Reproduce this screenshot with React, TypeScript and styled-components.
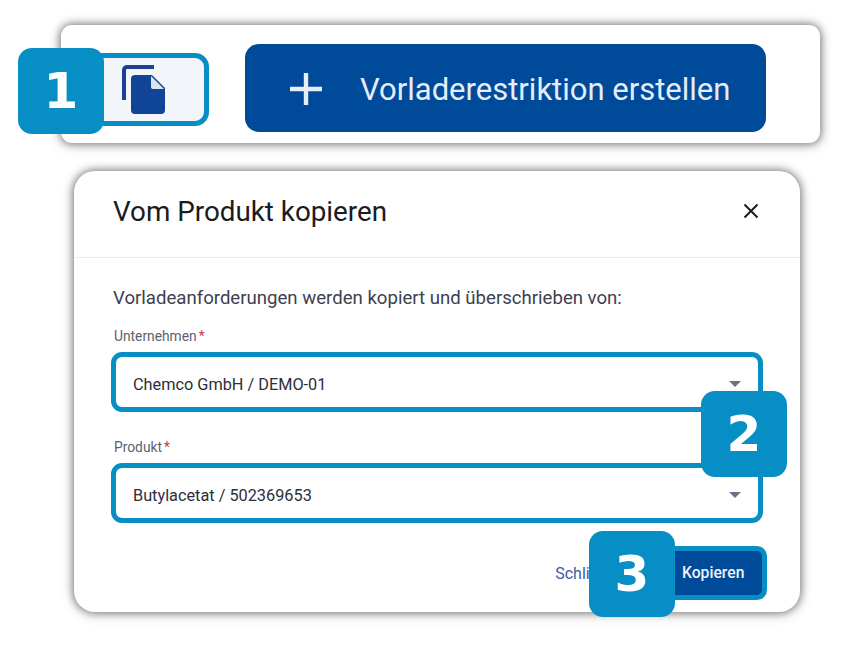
import React from 'react';
import styled, { createGlobalStyle } from 'styled-components';

const Global = createGlobalStyle`
    html, body {
        margin: 0;
        padding: 0;
        background: #fff;
        font-family: Roboto, "Liberation Sans", sans-serif;
    }
`;

const Page = styled.div`
    position: relative;
    width: 844px;
    height: 646px;
    overflow: hidden;
    padding: 25px 24px 0 61px;
    box-sizing: border-box;
`;

const Toolbar = styled.div`
    width: 759px;
    height: 118px;
    box-sizing: border-box;
    padding: 19px 54px 0 0;
    display: flex;
    justify-content: space-between;
    align-items: flex-start;
    background: #fff;
    border-radius: 11px;
    box-shadow: 0 0 9px 1px rgba(0, 0, 0, 0.5), 0 2px 16px rgba(0, 0, 0, 0.12);
`;

const CopyButton = styled.div`
    width: 148px;
    height: 73px;
    margin-top: 9px;
    box-sizing: border-box;
    display: flex;
    align-items: center;
    padding-left: 56px;
    background: #f2f6fb;
    border: 5px solid #078fc5;
    border-radius: 14px;
`;

const CreateButton = styled.div`
    width: 521px;
    height: 88px;
    box-sizing: border-box;
    padding: 2px 0 0 44px;
    display: flex;
    align-items: center;
    gap: 37px;
    background: #004a9a;
    color: #e6edf7;
    border-radius: 14px;
    font-size: 31px;
    font-weight: 400;
    white-space: nowrap;
`;

const Dialog = styled.div`
    width: 726px;
    height: 441px;
    margin: 28px 0 0 13px;
    background: #fff;
    border-radius: 21px;
    box-shadow: 0 0 9px 1px rgba(0, 0, 0, 0.5), 0 2px 16px rgba(0, 0, 0, 0.12);
    display: flex;
    flex-direction: column;
`;

const DialogHeader = styled.div`
    height: 87px;
    box-sizing: border-box;
    padding: 0 41px 6px 39px;
    display: flex;
    justify-content: space-between;
    align-items: center;
    border-bottom: 1px solid #eceef1;
`;

const Title = styled.div`
    font-size: 27.8px;
    color: #1b1c21;
`;

const DialogBody = styled.div`
    padding: 30px 37px 0 37px;
    display: flex;
    flex-direction: column;
`;

const Intro = styled.div`
    font-size: 18.6px;
    line-height: 20px;
    margin-left: 2px;
    color: #3d4150;
`;

const Label = styled.div`
    font-size: 13.8px;
    line-height: 16px;
    margin: 20px 0 8px 3px;
    color: #5d6070;

    span {
        color: #c9374e;
        margin-left: 2px;
    }
`;

const Select = styled.div`
    height: 60px;
    box-sizing: border-box;
    display: flex;
    justify-content: space-between;
    align-items: center;
    padding: 4px 17px 0 17px;
    border: 5px solid #078fc5;
    border-radius: 11px;
    font-size: 16.3px;
    color: #2c2e38;
    & + ${Label} {
        margin-top: 27px;
    }
`;

const Caret = styled.div`
    width: 0;
    height: 0;
    border-left: 6px solid transparent;
    border-right: 6px solid transparent;
    border-top: 6px solid #6e7085;
`;

const Actions = styled.div`
    display: flex;
    justify-content: flex-end;
    align-items: center;
    margin: 23px -4px 0 0;
    gap: 24px;
`;

const CloseLink = styled.div`
    font-size: 16px;
    color: #3b5aa6;
`;

const SubmitButton = styled.div`
    width: 118px;
    height: 54px;
    box-sizing: border-box;
    padding: 0 0 2px 28px;
    display: flex;
    align-items: center;
    background: #004a9a;
    border: 5px solid #078fc5;
    border-radius: 10px;
    color: #eef3fa;
    font-size: 15.7px;
    font-weight: 500;
`;

const Badge = styled.div<{ $x: number; $y: number }>`
    position: absolute;
    left: ${p => p.$x}px;
    top: ${p => p.$y}px;
    width: 86px;
    height: 86px;
    display: flex;
    align-items: center;
    justify-content: center;
    background: #078fc5;
    border-radius: 14px;
    color: #fff;
    font-family: "DejaVu Sans", sans-serif;
    font-weight: 700;
    font-size: 50px;
`;

const CopyIcon = () => (
    <svg width="46" height="50" viewBox="0 0 46 50">
        <path d="M2 35V5a3 3 0 0 1 3-3h27" fill="none" stroke="#1d3f95" strokeWidth="4" />
        <path d="M13 10h17l13 13v22a4 4 0 0 1-4 4H13a4 4 0 0 1-4-4V14a4 4 0 0 1 4-4z" fill="#0f4496" />
        <path d="M29 11l13 13H31a2 2 0 0 1-2-2z" fill="#dbe3f1" />
    </svg>
);

const PlusIcon = () => (
    <svg width="34" height="34" viewBox="0 0 34 34">
        <path d="M17 1v32M1 17h32" stroke="#e6edf7" strokeWidth="4.4" />
    </svg>
);

const CloseIcon = () => (
    <svg width="16" height="16" viewBox="0 0 16 16">
        <path d="M1.5 1.5l13 13M14.5 1.5l-13 13" stroke="#1b1c21" strokeWidth="2" />
    </svg>
);

export default function App() {
    return (
        <Page>
            <Global />
            <Toolbar>
                <CopyButton><CopyIcon /></CopyButton>
                <CreateButton><PlusIcon />Vorladerestriktion erstellen</CreateButton>
            </Toolbar>
            <Dialog>
                <DialogHeader>
                    <Title>Vom Produkt kopieren</Title>
                    <CloseIcon />
                </DialogHeader>
                <DialogBody>
                    <Intro>Vorladeanforderungen werden kopiert und überschrieben von:</Intro>
                    <Label>Unternehmen<span>*</span></Label>
                    <Select>Chemco GmbH / DEMO-01<Caret /></Select>
                    <Label>Produkt<span>*</span></Label>
                    <Select>Butylacetat / 502369653<Caret /></Select>
                    <Actions>
                        <CloseLink>Schließen</CloseLink>
                        <SubmitButton>Kopieren</SubmitButton>
                    </Actions>
                </DialogBody>
            </Dialog>
            <Badge $x={18} $y={48}>1</Badge>
            <Badge $x={701} $y={391}>2</Badge>
            <Badge $x={589} $y={531}>3</Badge>
        </Page>
    );
}
